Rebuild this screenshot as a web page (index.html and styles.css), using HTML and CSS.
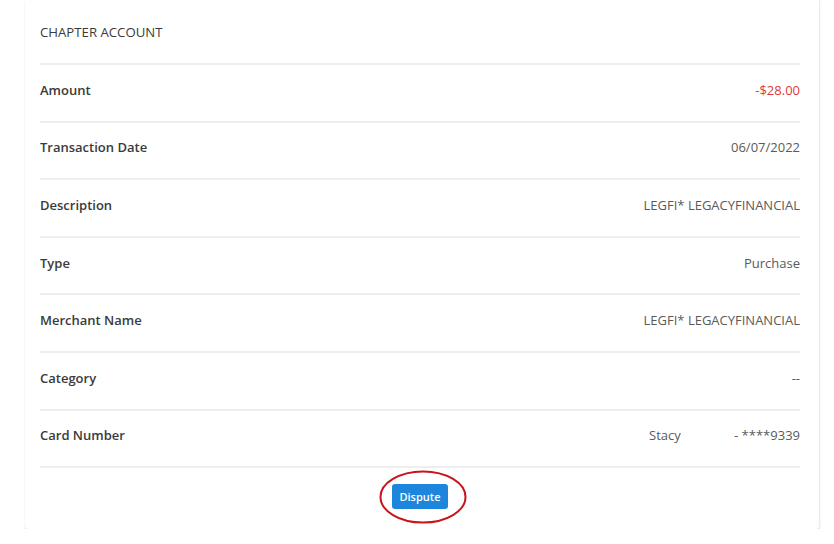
FILE: index.html
```html
<!DOCTYPE html>
<html lang="en">
<head>
    <meta charset="UTF-8">
    <meta name="viewport" content="width=device-width, initial-scale=1.0">
    <title>Transaction Details</title>
    <link rel="stylesheet" href="styles.css">
</head>
<body>

    <div class="card">
        <div class="card-header">CHAPTER ACCOUNT</div>

        <div class="row">
            <span class="label">Amount</span>
            <span class="value negative">-$28.00</span>
        </div>
        <div class="row">
            <span class="label">Transaction Date</span>
            <span class="value">06/07/2022</span>
        </div>
        <div class="row">
            <span class="label">Description</span>
            <span class="value">LEGFI* LEGACYFINANCIAL</span>
        </div>
        <div class="row">
            <span class="label">Type</span>
            <span class="value">Purchase</span>
        </div>
        <div class="row">
            <span class="label">Merchant Name</span>
            <span class="value">LEGFI* LEGACYFINANCIAL</span>
        </div>
        <div class="row">
            <span class="label">Category</span>
            <span class="value">--</span>
        </div>
        <div class="row">
            <span class="label">Card Number</span>
            <span class="value card-number">
                <span class="holder">Stacy</span>
                <span>- ****9339</span>
            </span>
        </div>

        <div class="card-footer">
            <div class="highlight">
                <button type="button" class="btn-dispute">Dispute</button>
                <svg class="circle" width="90" height="56" viewBox="0 0 90 56">
                    <ellipse cx="45" cy="28" rx="42.5" ry="25.5" fill="none" stroke="#c4161c" stroke-width="2"/>
                </svg>
            </div>
        </div>
    </div>

</body>
</html>
```

FILE: styles.css
```css
body {
    font-family: "Open Sans", Arial, sans-serif;
    margin: 0;
    padding: 0;
    background-color: #ffffff;
    color: #333;
}
.card {
    width: 795px;
    margin-left: 25px;
    box-sizing: border-box;
    padding: 0 19px 0 15px;
    background-color: white;
    border-right: 1px solid #ececec;
    border-radius: 0 0 4px 4px;
    box-shadow: 0 2px 2px rgba(0, 0, 0, 0.12);
}
.card-header {
    height: 63px;
    line-height: 64px;
    font-size: 13.2px;
    color: #3a3a3a;
    border-bottom: 2px solid #eeeeee;
}
.row {
    display: flex;
    justify-content: space-between;
    align-items: center;
    box-sizing: border-box;
    height: 57.6px;
    padding-bottom: 6px;
    font-size: 13px;
    border-bottom: 2px solid #eeeeee;
}
.label {
    font-weight: 600;
    color: #3a3a3a;
}
.value {
    color: #5a5a5a;
}
.negative {
    color: #e0383e;
}
.card-number {
    display: flex;
}
.holder {
    width: 85px;
}
.card-footer {
    height: 61px;
    padding-bottom: 4px;
    box-sizing: border-box;
    display: flex;
    justify-content: center;
    align-items: center;
}
.highlight {
    position: relative;
    width: 90px;
    height: 56px;
    display: flex;
    justify-content: center;
    align-items: center;
}
.btn-dispute {
    font-family: "Open Sans", Arial, sans-serif;
    font-size: 11px;
    font-weight: 600;
    width: 56px;
    height: 25px;
    padding: 0;
    background-color: #1d86dc;
    border: none;
    color: white;
    border-radius: 3px;
    cursor: pointer;
}
.circle {
    position: absolute;
    left: 3px;
    top: 0;
}
```
